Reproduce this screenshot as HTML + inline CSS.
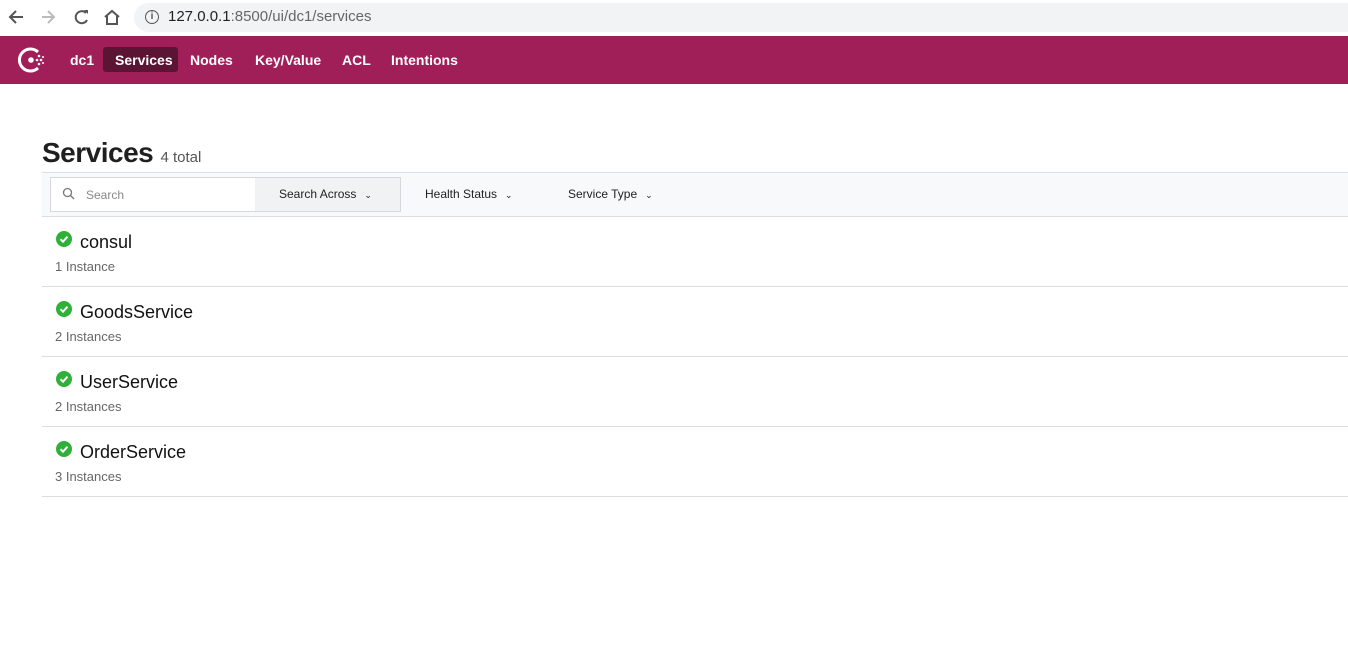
<!DOCTYPE html><html><head><style>
body{margin:0;width:1348px;height:659px;background:#fff;font-family:"Liberation Sans",sans-serif;position:relative;overflow:hidden}
.a{position:absolute}
.nav span{position:absolute;top:52px;color:#fff;font-weight:bold;font-size:14px}
.row{position:absolute;left:42px;width:1306px;height:69px;border-bottom:1px solid #dcdde0}
.row .n{position:absolute;left:38px;top:15px;font-size:18px;color:#111}
.row .i{position:absolute;left:13px;top:42px;font-size:13px;color:#666}
.row svg{position:absolute;left:14px;top:14px}
.f{position:absolute;top:187px;font-size:12px;color:#222}
.f i{font-style:normal;font-size:9px;margin-left:8px}
</style></head><body>
<div class="a" style="left:0;top:0;width:1348px;height:36px;background:#fff"></div>
<svg class="a" style="left:6px;top:8px" width="120" height="20" viewBox="0 0 120 20"><path d="M17 9H5M10 3L4 9l6 6" stroke="#555" stroke-width="2" fill="none"/><path d="M36 9h12M42 3l6 6-6 6" stroke="#bbb" stroke-width="2" fill="none"/><path d="M80 5a6 6 0 1 0 1 7" stroke="#555" stroke-width="2" fill="none"/><path d="M78 2h4v4z" fill="#555"/><path d="M99 9l7-6 7 6M101 8v8h10V8" stroke="#555" stroke-width="2" fill="none"/></svg>
<div class="a" style="left:134px;top:3px;width:1214px;height:29px;background:#f1f3f4;border-radius:15px 0 0 15px"></div>
<div class="a" style="left:145px;top:10px;width:12px;height:12px;border:1.5px solid #555;border-radius:50%;font-size:10px;text-align:center;line-height:12px;color:#555;font-weight:bold">i</div>
<div class="a" style="left:168px;top:8px;font-size:15px;color:#202124">127.0.0.1<span style="color:#666">:8500/ui/dc1/services</span></div>
<div class="a nav" style="left:0;top:36px;width:1348px;height:48px;background:#a11f58">
<svg class="a" style="left:16px;top:9px" width="32" height="30" viewBox="0 0 32 30"><path d="M22 7A11 11 0 1 0 22 23" stroke="#fff" stroke-width="3" fill="none"/><circle cx="15" cy="15" r="2.8" fill="#fff"/><g fill="#fff"><circle cx="21" cy="15" r="1.3"/><circle cx="25" cy="15" r="1.3"/><circle cx="23" cy="11" r="1.3"/><circle cx="23" cy="19" r="1.3"/><circle cx="27" cy="12" r="1"/><circle cx="27" cy="18" r="1"/></g></svg>
<div class="a" style="left:103px;top:11px;width:75px;height:25px;background:#5c1434;border-radius:3px"></div>
<span style="left:70px;top:16px">dc1</span><span style="left:115px;top:16px">Services</span><span style="left:190px;top:16px">Nodes</span><span style="left:255px;top:16px">Key/Value</span><span style="left:342px;top:16px">ACL</span><span style="left:391px;top:16px">Intentions</span>
</div>
<div class="a" style="left:42px;top:137px;font-size:28px;font-weight:bold;color:#1f1f1f;letter-spacing:-0.5px">Services <span style="font-size:15px;font-weight:normal;color:#555;letter-spacing:0">4 total</span></div>
<div class="a" style="left:42px;top:172px;width:1306px;height:43px;background:#f8f9fa;border-top:1px solid #dcdde0;border-bottom:1px solid #dcdde0"></div>
<div class="a" style="left:50px;top:177px;width:204px;height:33px;background:#fff;border:1px solid #d6d8dc"></div>
<div class="a" style="left:255px;top:177px;width:145px;height:33px;background:#f1f2f4;border:1px solid #d6d8dc;border-left:none"></div>
<svg class="a" style="left:62px;top:187px" width="14" height="14"><circle cx="5.5" cy="5.5" r="4" stroke="#777" stroke-width="1.3" fill="none"/><path d="M8.5 8.5l3.5 3.5" stroke="#777" stroke-width="1.3"/></svg>
<div class="f" style="left:86px;color:#888;top:188px">Search</div>
<div class="f" style="left:279px">Search Across<i>&#8964;</i></div>
<div class="f" style="left:425px">Health Status<i>&#8964;</i></div>
<div class="f" style="left:568px">Service Type<i>&#8964;</i></div>
<div class="row" style="top:217px"><svg width="16" height="16"><circle cx="8" cy="8" r="8" fill="#2eb039"/><path d="M4.5 8.2l2.5 2.5 4.5-5" stroke="#fff" stroke-width="2" fill="none"/></svg><div class="n">consul</div><div class="i">1 Instance</div></div>
<div class="row" style="top:287px"><svg width="16" height="16"><circle cx="8" cy="8" r="8" fill="#2eb039"/><path d="M4.5 8.2l2.5 2.5 4.5-5" stroke="#fff" stroke-width="2" fill="none"/></svg><div class="n">GoodsService</div><div class="i">2 Instances</div></div>
<div class="row" style="top:357px"><svg width="16" height="16"><circle cx="8" cy="8" r="8" fill="#2eb039"/><path d="M4.5 8.2l2.5 2.5 4.5-5" stroke="#fff" stroke-width="2" fill="none"/></svg><div class="n">UserService</div><div class="i">2 Instances</div></div>
<div class="row" style="top:427px"><svg width="16" height="16"><circle cx="8" cy="8" r="8" fill="#2eb039"/><path d="M4.5 8.2l2.5 2.5 4.5-5" stroke="#fff" stroke-width="2" fill="none"/></svg><div class="n">OrderService</div><div class="i">3 Instances</div></div>
</body></html>
